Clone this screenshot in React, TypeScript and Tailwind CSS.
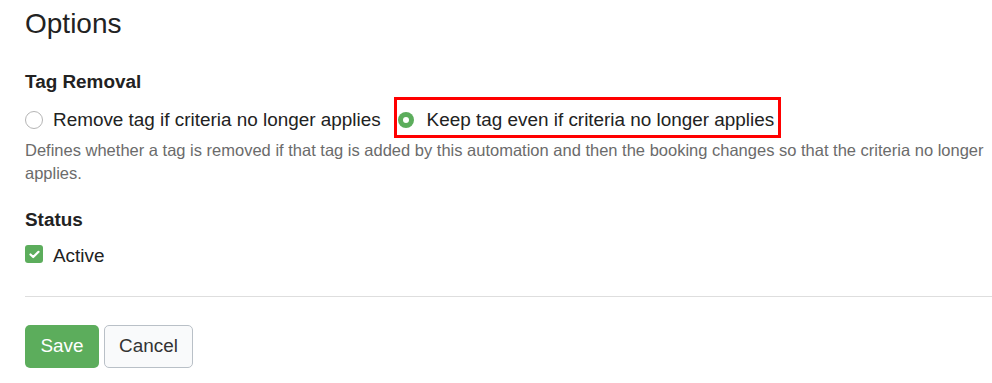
export default function App() {
  return (
    <div className="min-h-screen bg-white pl-[25px] pt-[8px] text-[#222]" style={{ fontFamily: '"Liberation Sans", Arial, sans-serif' }}>
      <h3 className="text-[28px] leading-[31px] font-normal text-[#222]">Options</h3>

      {/* Tag removal */}
      <div className="mt-[29.5px] text-[18.9px] leading-[26px] font-bold">Tag Removal</div>
      <div className="mt-[12px] flex h-[26px] items-center text-[18.9px] leading-[26px]">
        <label className="flex items-center">
          <span className="h-[18px] w-[18px] rounded-full border border-[#b5b5b5] bg-white" />
          <span className="ml-[10px]">Remove tag if criteria no longer applies</span>
        </label>
        <label className="relative ml-[17px] flex items-center">
          <span className="flex h-[16px] w-[16px] items-center justify-center rounded-full bg-[#5cad5c]">
            <span className="h-[6px] w-[6px] rounded-full bg-white" />
          </span>
          <span className="ml-[13px]">Keep tag even if criteria no longer applies</span>
          <span className="pointer-events-none absolute -top-[10px] -bottom-[5px] -left-[4px] -right-[7px] border-[3px] border-[#ff0000]" />
        </label>
      </div>
      <p className="mt-[6.5px] text-[16.5px] leading-[23px] text-[#6b6b6b]">
        Defines whether a tag is removed if that tag is added by this automation and then the booking changes so that the criteria no longer applies.
      </p>

      {/* Status */}
      <div className="mt-[22px] text-[18.9px] leading-[26px] font-bold">Status</div>
      <label className="mt-[10px] flex h-[26px] items-center text-[18.9px] leading-[26px]">
        <span className="-mt-[4px] flex h-[18px] w-[18px] items-center justify-center rounded-[3px] bg-[#5cad5c]">
          <svg width="11" height="9" viewBox="0 0 11 9" fill="none">
            <path d="M1.5 4.5 L4.2 7 L9.5 1.8" stroke="white" strokeWidth="2.2" strokeLinecap="round" strokeLinejoin="round" />
          </svg>
        </span>
        <span className="ml-[10px]">Active</span>
      </label>

      <div className="mt-[27px] border-t border-[#dedede]" />

      <div className="mt-[28px] flex gap-[5px]">
        <button className="h-[43px] w-[74px] rounded-[5px] bg-[#5cad5c] text-[18.9px] text-white">Save</button>
        <button className="h-[43px] w-[89px] rounded-[5px] border border-[#b9c0c7] bg-[#f9fafb] text-[18.9px] text-[#333]">Cancel</button>
      </div>
    </div>
  );
}
